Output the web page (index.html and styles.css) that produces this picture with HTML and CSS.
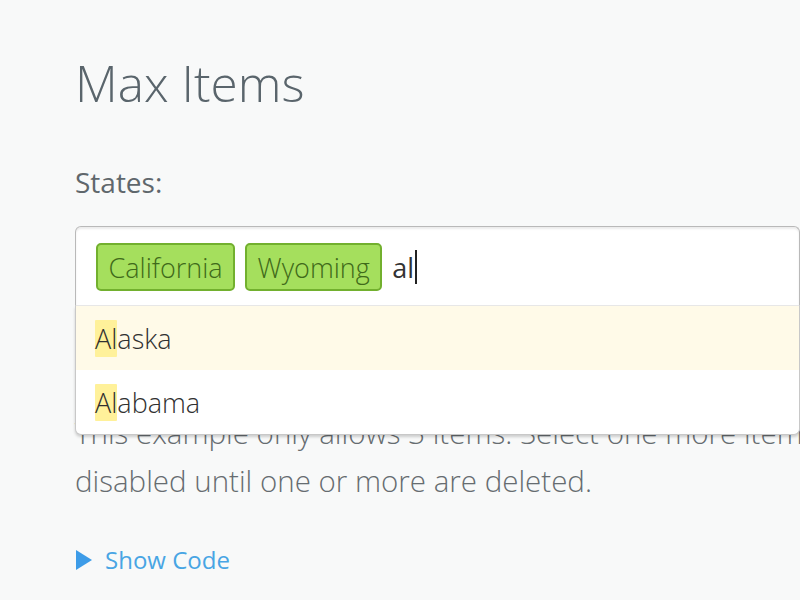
FILE: index.html
```html
<!DOCTYPE html>
<html lang="en">
<head>
  <meta charset="UTF-8" />
  <meta name="viewport" content="width=device-width, initial-scale=1.0" />
  <title>Max Items</title>
  <link rel="stylesheet" href="styles.css">
</head>
<body>
  <div class="demo">
    <h2>Max Items</h2>

    <div class="control-group">
      <label for="select-state">States:</label>

      <div class="selectize">
        <div class="selectize-input">
          <div class="item">California</div>
          <div class="item">Wyoming</div>
          <span class="typed">al</span><span class="caret"></span>
        </div>
        <div class="selectize-dropdown">
          <div class="option active"><span class="highlight">Al</span>aska</div>
          <div class="option"><span class="highlight">Al</span>abama</div>
        </div>
      </div>
    </div>

    <p class="note">This example only allows 3 items. Select one more item and the control will be disabled until one or more are deleted.</p>

    <div class="show-code">
      <span class="arrow"></span>
      <a href="#">Show Code</a>
    </div>
  </div>
</body>
</html>
```

FILE: styles.css
```css
body, html {
  margin: 0;
  padding: 0;
  width: 100%;
  height: 100%;
  overflow: hidden;
  background: #f8f9f9;
  color: #666c70;
  font-family: "Open Sans", "Liberation Sans", sans-serif;
}
.demo {
  width: 1100px;
  padding: 47px 0 0 75px;
}
h2 {
  margin: 0;
  font-size: 49.5px;
  font-weight: 300;
  line-height: 72px;
  color: #5a656c;
}
.control-group {
  margin-top: 43px;
}
label {
  display: block;
  font-size: 28px;
  font-weight: 400;
  line-height: 40px;
  color: #5f676c;
  margin-bottom: 24px;
}
.selectize {
  position: relative;
  width: 725px;
  height: 80px;
}
.selectize-input {
  box-sizing: border-box;
  height: 80px;
  display: flex;
  align-items: center;
  gap: 10px;
  padding: 0 20px;
  background: #fff;
  border: 1px solid #b9b9b9;
  border-bottom-color: #e8e8e8;
  border-radius: 6px 6px 0 0;
  box-shadow: inset 0 2px 2px rgba(0, 0, 0, 0.08);
}
.item {
  box-sizing: border-box;
  height: 48px;
  margin-top: 2px;
  padding: 0 10.5px;
  display: flex;
  align-items: center;
  font-size: 27px;
  font-weight: 300;
  color: #3f6a1a;
  background: #a5df5d;
  border: 2px solid #72b02e;
  border-radius: 5px;
}
.typed {
  font-size: 27px;
  color: #333;
  margin-top: 2px;
}
.caret {
  display: inline-block;
  width: 2px;
  height: 34px;
  margin: 2px 0 0 -9px;
  background: #222;
}
.selectize-dropdown {
  position: absolute;
  left: 0;
  right: 0;
  top: 80px;
  background: #fff;
  border: 1px solid #c8c8c8;
  border-top: none;
  border-radius: 0 0 6px 6px;
  box-shadow: 0 2px 3px rgba(0, 0, 0, 0.18);
  z-index: 10;
}
.option {
  height: 64px;
  display: flex;
  align-items: center;
  padding: 0 19px;
  font-size: 27px;
  font-weight: 300;
  color: #303030;
}
.option.active {
  background: #fffae8;
}
.highlight {
  background: #fff19a;
  border-radius: 1px;
}
.note {
  margin: 103px 0 0;
  font-size: 29.5px;
  font-weight: 300;
  line-height: 48px;
  color: #666c70;
}
.show-code {
  margin-top: 38px;
  display: flex;
  align-items: center;
  gap: 13px;
}
.arrow {
  width: 0;
  height: 0;
  margin-left: 1px;
  border-top: 10px solid transparent;
  border-bottom: 10px solid transparent;
  border-left: 16px solid #3d9ce8;
}
.show-code a {
  font-size: 24px;
  font-weight: 400;
  color: #48a5e4;
  text-decoration: none;
}
```
